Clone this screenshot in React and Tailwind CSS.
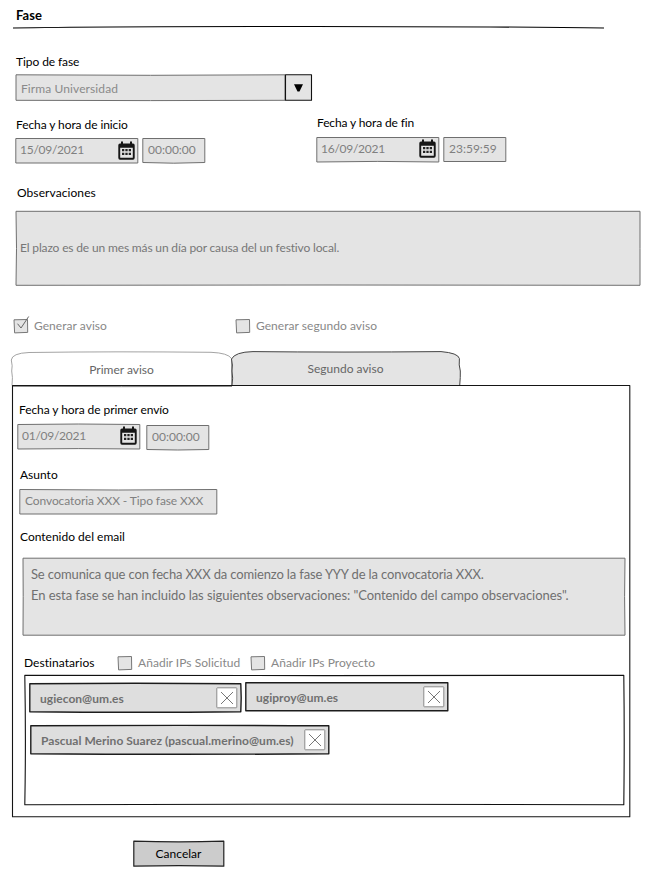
import React from "react";

const GREY = "#6f6f6f";
const FILL = "#e4e4e4";

/* Rectangle with slightly bowed, hand-drawn edges. bend = [top, right, bottom, left] */
function Sketch({ w, h, x = 0.5, y = 0.5, bend = [0, 0, 0, 0], fill = FILL, stroke = GREY, sw = 1, className = "", children }) {
  const [t, r, b, l] = bend;
  const r2 = x + w;
  const b2 = y + h;
  const d = `M${x} ${y}Q${x + w / 2} ${y + t * 2} ${r2} ${y}Q${r2 + r * 2} ${y + h / 2} ${r2} ${b2}Q${x + w / 2} ${b2 + b * 2} ${x} ${b2}Q${x + l * 2} ${y + h / 2} ${x} ${y}Z`;
  return (
    <div className={"relative isolate shrink-0 " + className}>
      <svg className="absolute left-0 top-0 -z-10 h-full w-full overflow-visible" aria-hidden="true">
        <path d={d} fill={fill} stroke={stroke} strokeWidth={sw} strokeLinejoin="round" />
      </svg>
      {children}
    </div>
  );
}

function Calendar({ className = "" }) {
  return (
    <svg className={"h-[19px] w-[17px] shrink-0 " + className} viewBox="0 0 17 19" aria-hidden="true">
      <path
        fillRule="evenodd"
        fill="#161616"
        d="M3 1.2Q3 .3 4 .3T5 1.2V2.4H12V1.2Q12 .3 13 .3T14 1.2V2.4H15Q16.7 2.4 16.7 4.2V16.8Q16.7 18.7 15 18.7H2Q.3 18.7.3 16.8V4.2Q.3 2.4 2 2.4H3ZM2.2 6.7V16.8H14.8V6.7Z"
      />
      <path fill="#222" d="M4 8h2.3v2.3H4zM7.35 8h2.3v2.3H7.35zM10.7 8h2.3v2.3h-2.3zM4 11.8h2.3v2.3H4zM7.35 11.8h2.3v2.3H7.35zM10.7 11.8h2.3v2.3h-2.3z" />
    </svg>
  );
}

function DateTime({ date, time, gap, dateBend, timeBend, timeH = 24, timeClass = "", iconClass = "mt-[3px]" }) {
  return (
    <div className={"flex items-start " + gap}>
      <Sketch w={122} h={24.5} x={0.8} bend={dateBend} className="flex h-[25px] w-[123px] items-start pl-[5px] text-[#808080]">
        <span className="mt-[4px] w-[98px] tracking-[-0.27px]">{date}</span>
        <Calendar className={iconClass} />
      </Sketch>
      <Sketch w={62} h={timeH} x={0.8} bend={timeBend} className={"h-[25px] w-[63px] pl-[6px] pt-[4px] text-[#808080] " + timeClass}>
        <span className="block">{time}</span>
      </Sketch>
    </div>
  );
}

function Check({ label, checked, className = "" }) {
  return (
    <div className={"flex items-start " + className}>
      <svg className="mt-px h-[15px] w-[15px] shrink-0 overflow-visible" aria-hidden="true">
        <path d="M0 .8L13.5 .5L13.7 13.4L.6 13.9Z" fill={FILL} stroke="#777" />
        {checked && <path d="M3.5 4.7L7 9L14.7 -2.5" fill="none" stroke="#666" />}
      </svg>
      <span className="ml-[5px] tracking-[0.04px] text-[#888]">{label}</span>
    </div>
  );
}

function Chip({ w, label, width, bend, x = 0.8, y = 0.8, pad = "pr-[3px]", className = "" }) {
  return (
    <Sketch w={w} h={28} x={x} y={y} bend={bend} fill="#dedede" stroke="#1c1c1c" sw={1.4} className={"flex h-[29px] justify-between pl-[11px] pt-[4px] " + pad + " " + width + " " + className}>
      <span className="mt-[4px] font-bold tracking-[0.03px] text-[#707070]">{label}</span>
      <svg className="h-[22px] w-[22px] shrink-0" viewBox="0 0 22 22" aria-hidden="true">
        <rect x=".8" y=".8" width="20" height="20" rx=".6" fill="#fff" stroke="#8a8a8a" />
        <path d="M5 5L17 17M17 5L5 17" stroke="#555" strokeWidth=".8" />
      </svg>
    </Sketch>
  );
}

export default function App() {
  return (
    <div className="flex h-[876px] w-[649px] flex-col items-start overflow-hidden whitespace-nowrap bg-white pt-[7px] font-['Lato',sans-serif] text-[12px] leading-4 text-black">
      <h1 className="ml-4 text-[13px] leading-4 font-bold tracking-[0.1px]">Fase</h1>
      <svg className="ml-[13px] mt-[2px] h-[5px] w-[591px] shrink-0" aria-hidden="true">
        <path d="M0 3Q90 1.3 300 1.5T591 3" fill="none" stroke="#000" strokeWidth="1.1" />
      </svg>

      <label className="ml-4 mt-6 tracking-[-0.08px]">Tipo de fase</label>
      <div className="ml-[15px] mt-[4px] flex">
        <Sketch w={269} h={25.5} x={1} y={0.8} bend={[0.5, 0, 0.3, 0]} className="h-[27px] w-[270px] pl-[6px] pt-[7px] tracking-[0.1px] text-[#8a8a8a]">
          Firma Universidad
        </Sketch>
        <Sketch w={26} h={25.5} y={0.8} stroke="#111" sw={1.1} className="flex h-[27px] w-[27px] items-center justify-center pt-px">
          <svg className="h-2 w-[9px]" viewBox="0 0 9 8" aria-hidden="true">
            <path d="M0 .3H9L5.5 7.6H3.5Z" />
          </svg>
        </Sketch>
      </div>

      <div className="mt-[14px] flex w-full">
        <div className="w-[302px] shrink-0 pl-[15px] pt-[2px]">
          <label className="ml-px block tracking-[-0.08px]">Fecha y hora de inicio</label>
          <div className="mt-[5px]">
            <DateTime date="15/09/2021" time="00:00:00" gap="gap-[4px]" dateBend={[0, 0, 0, 0]} timeBend={[0, 0, 0.7, 0]} />
          </div>
        </div>
        <div className="pl-[14px]">
          <label className="ml-px block tracking-[-0.12px]">Fecha y hora de fin</label>
          <div className="mt-[6px]">
            <DateTime date="16/09/2021" time="23:59:59" gap="gap-[4px]" dateBend={[0, 0, -0.6, 0]} timeBend={[0, 0, 0, 0]} iconClass="mt-[2px]" />
          </div>
        </div>
      </div>

      <label className="ml-[17px] mt-[22px] tracking-[0.08px]">Observaciones</label>
      <Sketch w={624} h={74} x={1} y={0.3} bend={[0, 0, -0.3, 0.5]} className="ml-[15px] mt-[10px] h-[74px] w-[626px] pl-[5px] pt-[29px] tracking-[-0.15px] text-[#777]">
        El plazo es de un mes más un día por causa del un festivo local.
      </Sketch>

      <div className="ml-[14px] mt-[33px] flex">
        <Check label="Generar aviso" checked className="w-[222px]" />
        <Check label="Generar segundo aviso" />
      </div>

      <div className="relative isolate ml-[11px] mt-[17px] flex h-[34px] w-[450px] shrink-0">
        <svg className="absolute left-0 top-0 -z-10 h-full w-full overflow-visible" aria-hidden="true">
          <path d="M1 34.5Q2 26 .7 20Q1.8 15 .3 9Q1 2.2 18 1.5Q105 .3 200 1.3Q217 2 220.5 7.5V34.5" fill="#fff" stroke="#999" strokeWidth=".9" />
          <path d="M221 34.5Q222.3 27 221 20Q222 14 220.5 8Q224 1 242 .6Q330 1.5 430 .6Q447 2 448.4 7.5Q447.6 14 449.3 20Q449.5 26 448.7 34.5" fill={FILL} stroke="#444" />
          <path d="M2 35.3Q110 36 221 35.3" fill="none" stroke="#777" />
        </svg>
        <div className="w-[221px] pt-[11px] text-center text-[#666]">Primer aviso</div>
        <div className="w-[227px] pt-[10px] text-center text-[#666]">Segundo aviso</div>
      </div>

      <Sketch w={617.3} h={431.3} fill="none" stroke="#151515" sw={1.1} className="ml-[12px] flex h-[432px] w-[619px] flex-col items-start pt-[17px]">
        <label className="ml-[7px] tracking-[-0.07px]">Fecha y hora de primer envío</label>
        <div className="ml-[5px] mt-[6px]">
          <DateTime date="01/09/2021" time="00:00:00" gap="gap-[6px]" dateBend={[-0.5, 0, -0.4, 0]} timeBend={[0, 0, 0.5, 0]} timeClass="mt-px" iconClass="mt-[2px]" />
        </div>
        <label className="ml-[8px] mt-[17px]">Asunto</label>
        <Sketch w={197} h={24.5} x={0.8} bend={[0.5, 0, 0, 0]} className="ml-[7px] mt-[6px] h-[25px] w-[198px] pl-[6px] pt-[4px] tracking-[-0.1px] text-[#808080]">
          Convocatoria XXX - Tipo fase XXX
        </Sketch>
        <label className="ml-[8px] mt-[15px]">Contenido del email</label>
        <Sketch w={602} h={77} x={1} y={0.2} bend={[0, -0.4, 0, 0.2]} className="ml-[10px] mt-[13px] h-[77px] w-[603px] pl-[9px] pt-[6px] text-[13px] leading-[21px] text-[#707070]">
          <p className="tracking-[-0.14px]">Se comunica que con fecha XXX da comienzo la fase YYY de la convocatoria XXX.</p>
          <p className="tracking-[-0.07px]">En esta fase se han incluido las siguientes observaciones: "Contenido del campo observaciones".</p>
        </Sketch>
        <div className="ml-[12px] mt-5 flex">
          <label className="w-[94px] tracking-[0.05px]">Destinatarios</label>
          <Check label="Añadir IPs Solicitud" className="w-[133px]" />
          <Check label="Añadir IPs Proyecto" />
        </div>
        <Sketch w={599} h={129.5} x={0.8} y={0.2} fill="#fff" stroke="#111" sw={1.1} bend={[0.4, 0.4, -0.5, 0.6]} className="ml-[12px] mt-[4px] h-[130px] w-[600px] pl-[5px] pt-[7px]">
          <div className="flex items-start gap-[4px]">
            <Chip label="ugiecon@um.es" w={211} width="w-[212px]" bend={[-0.6, 0.4, 0.5, 0]} className="mt-px" />
            <Chip label="ugiproy@um.es" w={202} width="w-[202px]" pad="pr-[2px]" bend={[0, 0, 0, 0]} />
          </div>
          <Chip label="Pascual Merino Suarez (pascual.merino@um.es)" w={298} width="w-[299px]" bend={[-0.4, 0, 0.5, 0]} className="ml-px mt-[13px]" />
        </Sketch>
      </Sketch>

      <Sketch w={90} h={25} x={0.8} y={0.2} bend={[0.7, 0, -0.6, 0]} fill="#ccc" stroke="#222" sw={1.2} className="ml-[133px] mt-6 h-[26px] w-[91px] pt-[5px] text-center">
        Cancelar
      </Sketch>
    </div>
  );
}
